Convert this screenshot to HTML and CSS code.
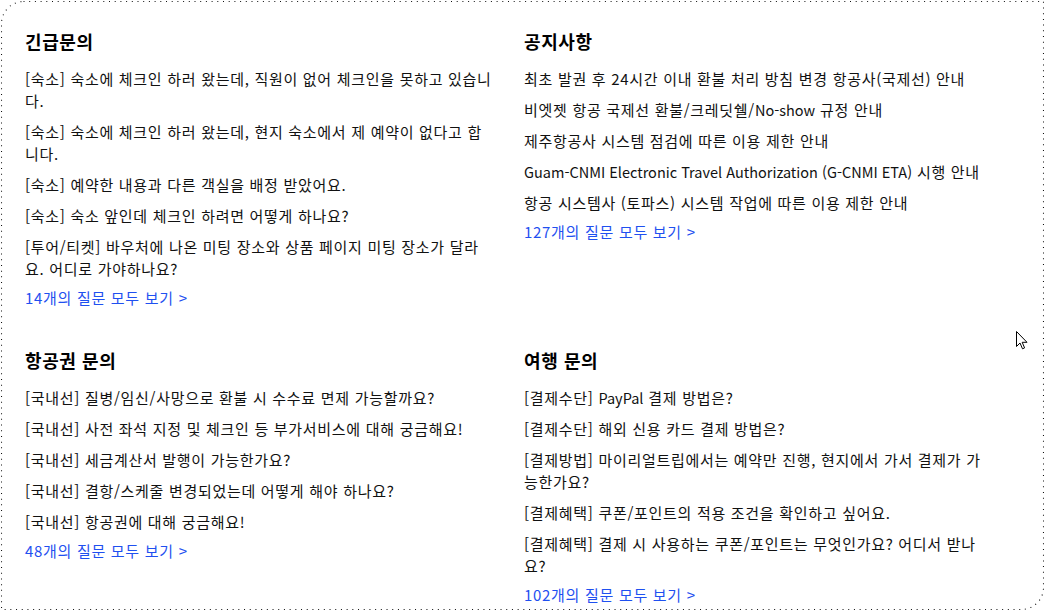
FILE: index.html
```html
<!DOCTYPE html>
<html lang="ko">
<head>
<meta charset="utf-8">
<title>자주 묻는 질문</title>
<link rel="stylesheet" href="styles.css">
</head>
<body>
<div class="faq">
  <svg class="frame" width="1043" height="609" viewBox="0 0 1043 609" aria-hidden="true">
    <path d="M22.5 0.5 H1042.5 V586.5 A22 22 0 0 1 1020.5 608.5 H0.5 V22.5 A22 22 0 0 1 22.5 0.5 Z" fill="none" stroke="#111" stroke-width="1.1" stroke-dasharray="1 4.7"/>
  </svg>
  <div class="grid">
    <section class="group">
      <h2 class="group-title">긴급문의</h2>
      <ul class="q-list">
        <li class="q-item">[숙소] 숙소에 체크인 하러 왔는데, 직원이 없어 체크인을 못하고 있습니다.</li>
        <li class="q-item">[숙소] 숙소에 체크인 하러 왔는데, 현지 숙소에서 제 예약이 없다고 합니다.</li>
        <li class="q-item">[숙소] 예약한 내용과 다른 객실을 배정 받았어요.</li>
        <li class="q-item">[숙소] 숙소 앞인데 체크인 하려면 어떻게 하나요?</li>
        <li class="q-item">[투어/티켓] 바우처에 나온 미팅 장소와 상품 페이지 미팅 장소가 달라요. 어디로 가야하나요?</li>
      </ul>
      <a class="more" href="#">14개의 질문 모두 보기 &gt;</a>
    </section>
    <section class="group">
      <h2 class="group-title">공지사항</h2>
      <ul class="q-list">
        <li class="q-item">최초 발권 후 24시간 이내 환불 처리 방침 변경 항공사(국제선) 안내</li>
        <li class="q-item">비엣젯 항공 국제선 환불/크레딧쉘/<span class="en">No-show</span> 규정 안내</li>
        <li class="q-item">제주항공사 시스템 점검에 따른 이용 제한 안내</li>
        <li class="q-item"><span class="en">Guam-CNMI Electronic Travel Authorization (G-CNMI ETA)</span> 시행 안내</li>
        <li class="q-item">항공 시스템사 (토파스) 시스템 작업에 따른 이용 제한 안내</li>
      </ul>
      <a class="more" href="#">127개의 질문 모두 보기 &gt;</a>
    </section>
    <section class="group">
      <h2 class="group-title">항공권 문의</h2>
      <ul class="q-list">
        <li class="q-item">[국내선] 질병/임신/사망으로 환불 시 수수료 면제 가능할까요?</li>
        <li class="q-item">[국내선] 사전 좌석 지정 및 체크인 등 부가서비스에 대해 궁금해요!</li>
        <li class="q-item">[국내선] 세금계산서 발행이 가능한가요?</li>
        <li class="q-item">[국내선] 결항/스케줄 변경되었는데 어떻게 해야 하나요?</li>
        <li class="q-item">[국내선] 항공권에 대해 궁금해요!</li>
      </ul>
      <a class="more" href="#">48개의 질문 모두 보기 &gt;</a>
    </section>
    <section class="group">
      <h2 class="group-title">여행 문의</h2>
      <ul class="q-list">
        <li class="q-item">[결제수단] <span class="en">PayPal</span> 결제 방법은?</li>
        <li class="q-item">[결제수단] 해외 신용 카드 결제 방법은?</li>
        <li class="q-item">[결제방법] 마이리얼트립에서는 예약만 진행, 현지에서 가서 결제가 가능한가요?</li>
        <li class="q-item">[결제혜택] 쿠폰/포인트의 적용 조건을 확인하고 싶어요.</li>
        <li class="q-item">[결제혜택] 결제 시 사용하는 쿠폰/포인트는 무엇인가요? 어디서 받나요?</li>
      </ul>
      <a class="more" href="#">102개의 질문 모두 보기 &gt;</a>
    </section>
  </div>
  <svg class="cursor" width="13" height="19" viewBox="0 0 13 19" aria-hidden="true">
    <path d="M0.5 0.5 V15.5 L4 12 L6.5 17.8 L8.6 16.9 L6.2 11.3 L11 11.3 Z" fill="#fff" stroke="#000" stroke-width="1" stroke-linejoin="miter"/>
  </svg>
</div>
</body>
</html>
```

FILE: styles.css
```css
html, body {
  margin: 0;
  padding: 0;
  background: #ffffff;
}

body {
  font-family: "Noto Sans CJK KR", "Noto Sans", sans-serif;
  color: #111111;
}

.faq {
  position: relative;
  box-sizing: border-box;
  width: 1043px;
  height: 609px;
  margin: 1px;
  padding: 27px 24px 0 24px;
  overflow: hidden;
  background: #ffffff;
}

.frame {
  position: absolute;
  left: 0;
  top: 0;
  pointer-events: none;
}

.grid {
  display: grid;
  grid-template-columns: 467.5px 467.5px;
  column-gap: 31.5px;
  row-gap: 38.5px;
  align-items: start;
}

.group {
  display: flex;
  flex-direction: column;
  align-items: flex-start;
}

.group-title {
  margin: 0 0 13.5px 0;
  font-size: 18px;
  line-height: 26px;
  font-weight: 700;
  letter-spacing: 0.6px;
  color: #000000;
}

.q-list {
  list-style: none;
  margin: 0;
  padding: 0;
  display: flex;
  flex-direction: column;
  gap: 9px;
}

.q-item {
  font-size: 15px;
  line-height: 22px;
  letter-spacing: 0.7px;
}

.en {
  font-size: 14.5px;
  letter-spacing: 0;
}

.more {
  margin-top: 7px;
  font-size: 15px;
  line-height: 22px;
  letter-spacing: 0.7px;
  color: #1f50f0;
  text-decoration: none;
}

.cursor {
  position: absolute;
  left: 1015px;
  top: 330px;
}
```
